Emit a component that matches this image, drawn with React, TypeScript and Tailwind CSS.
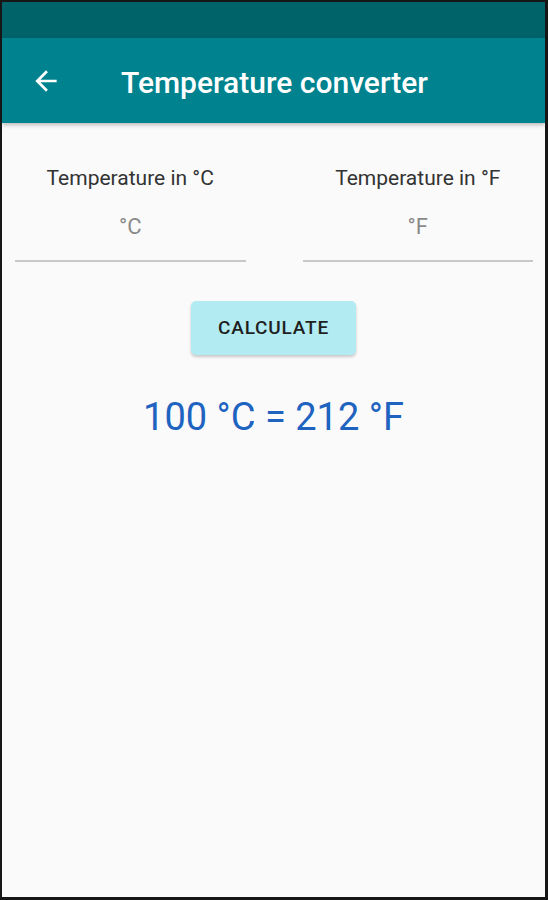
import React from 'react';

function BackArrow() {
  return (
    <svg width="32" height="32" viewBox="0 0 24 24" fill="white">
      <path d="M20 11H7.83l5.59-5.59L12 4l-8 8 8 8 1.41-1.41L7.83 13H20v-2z" />
    </svg>
  );
}

function Field({ label, unit }: { label: string; unit: string }) {
  return (
    <div className="flex flex-col items-center">
      <p className="text-[21px] text-[#333333] leading-none mt-[45px]">{label}</p>
      <p className="text-[22px] text-[#8a8a8a] leading-none mt-[27px]">{unit}</p>
      <div className="w-full h-[2px] bg-[#c8c8c8] mt-[22px]"></div>
    </div>
  );
}

export default function App() {
  return (
    <div
      className="w-[548px] h-[900px] border-l-2 border-t-2 border-r-[3px] border-b-[3px] border-[#161616] bg-[#fafafa] flex flex-col overflow-hidden"
      style={{ fontFamily: 'Roboto, "Noto Sans", sans-serif' }}
    >
      {/* status bar */}
      <div className="h-[36px] bg-[#00636a]"></div>

      {/* app bar */}
      <div className="h-[85px] bg-[#00838f] flex items-center shadow-[0_2px_4px_rgba(0,0,0,0.25)] relative z-10">
        <div className="ml-[28px] flex items-center">
          <BackArrow />
        </div>
        <h1 className="ml-[59px] mt-[3px] text-white text-[30px] font-medium">Temperature converter</h1>
      </div>

      {/* content */}
      <div className="flex flex-col items-center">
        <div className="w-full grid grid-cols-2 gap-[57px] pl-[13px] pr-[12px]">
          <Field label="Temperature in °C" unit="°C" />
          <Field label="Temperature in °F" unit="°F" />
        </div>

        <button className="mt-[39px] w-[165px] h-[54px] rounded-[5px] bg-[#b2ebf2] shadow-[0_2px_3px_rgba(0,0,0,0.2)] text-[19px] font-medium text-[#1f1f1f] tracking-[0.8px]">
          CALCULATE
        </button>

        <p className="mt-[43px] text-[38px] text-[#1e63c0] leading-none">100 °C = 212 °F</p>
      </div>
    </div>
  );
}
